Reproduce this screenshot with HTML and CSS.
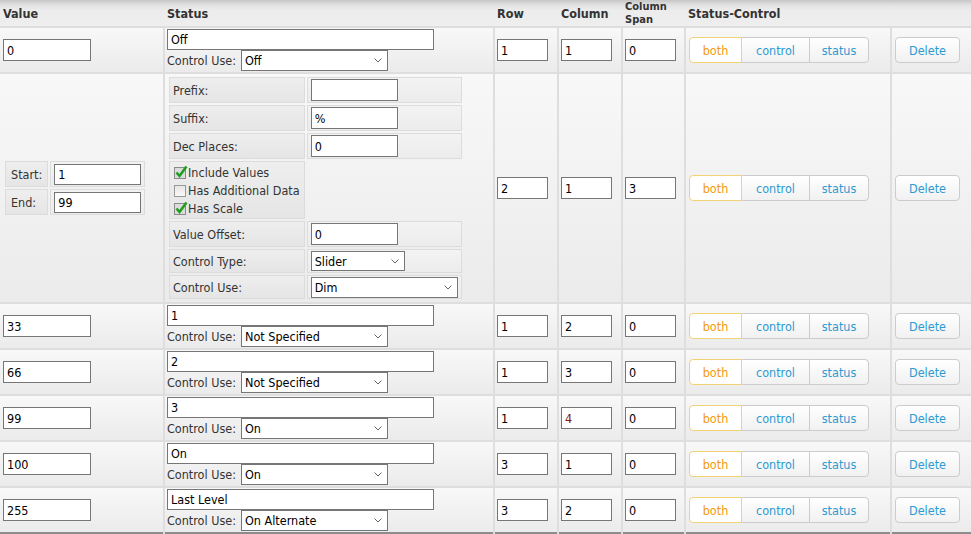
FILE: index.html
```html
<!DOCTYPE html>
<html>
<head>
<meta charset="utf-8">
<title>Values</title>
<link rel="stylesheet" href="styles.css">
</head>
<body>
<table class="grid">
  <colgroup>
    <col class="c-val"><col class="c-status"><col class="c-row"><col class="c-col"><col class="c-span"><col class="c-sc"><col class="c-del">
  </colgroup>
  <thead>
    <tr><th>Value</th><th>Status</th><th>Row</th><th>Column</th><th class="two">Column<br>Span</th><th>Status-Control</th><th></th></tr>
  </thead>
  <tbody>
    <tr>
      <td class="cv"><input class="in-val" value="0"></td>
      <td class="cs"><input class="in-status" value="Off"><div class="use"><label>Control Use:</label><span class="sel w147"><select><option>Off</option></select><svg class="chev" width="8" height="5" viewBox="0 0 8 5"><path d="M0.5 0.5L4 4L7.5 0.5" fill="none" stroke="#666"/></svg></span></div></td>
      <td><input class="in-num" value="1"></td>
      <td><input class="in-num" value="1"></td>
      <td><input class="in-num" value="0"></td>
      <td class="csc"><div class="seg"><button class="on">both</button><button class="mid">control</button><button class="last">status</button></div></td>
      <td class="cd"><button class="btn">Delete</button></td>
    </tr>
    <tr>
      <td class="cv">
        <table class="mini">
          <tr><td class="lbl">Start:</td><td class="fld"><input class="in-mini" value="1"></td></tr>
          <tr><td class="lbl">End:</td><td class="fld"><input class="in-mini" value="99"></td></tr>
        </table>
      </td>
      <td class="cs">
        <table class="props">
          <tr><td class="lbl">Prefix:</td><td class="fld"><input class="in-prop" value=""></td></tr>
          <tr><td class="lbl">Suffix:</td><td class="fld"><input class="in-prop" value="%"></td></tr>
          <tr><td class="lbl">Dec Places:</td><td class="fld"><input class="in-prop" value="0"></td></tr>
          <tr>
            <td class="lbl checks">
              <label class="cb"><svg width="14" height="14" viewBox="0 0 14 14"><rect x="0.5" y="2.5" width="11" height="11" fill="#dcdcdc" stroke="#8a8a8a"/><path d="M2.5 7.5L5.5 11L12.5 1.5" fill="none" stroke="#1f9e1f" stroke-width="2.6"/></svg>Include Values</label>
              <label class="cb"><svg width="14" height="14" viewBox="0 0 14 14"><defs><linearGradient id="ub" x1="0" y1="0" x2="0" y2="1"><stop offset="0" stop-color="#e4e4e4"/><stop offset="1" stop-color="#fafafa"/></linearGradient></defs><rect x="0.5" y="2.5" width="11" height="11" fill="url(#ub)" stroke="#9a9a9a"/></svg>Has Additional Data</label>
              <label class="cb"><svg width="14" height="14" viewBox="0 0 14 14"><rect x="0.5" y="2.5" width="11" height="11" fill="#dcdcdc" stroke="#8a8a8a"/><path d="M2.5 7.5L5.5 11L12.5 1.5" fill="none" stroke="#1f9e1f" stroke-width="2.6"/></svg>Has Scale</label>
            </td>
            <td class="empty"></td>
          </tr>
          <tr><td class="lbl">Value Offset:</td><td class="fld"><input class="in-prop" value="0"></td></tr>
          <tr class="selrow"><td class="lbl">Control Type:</td><td class="fld"><span class="sel w94"><select><option>Slider</option></select><svg class="chev" width="8" height="5" viewBox="0 0 8 5"><path d="M0.5 0.5L4 4L7.5 0.5" fill="none" stroke="#666"/></svg></span></td></tr>
          <tr class="selrow"><td class="lbl">Control Use:</td><td class="fld"><span class="sel w147"><select><option>Dim</option></select><svg class="chev" width="8" height="5" viewBox="0 0 8 5"><path d="M0.5 0.5L4 4L7.5 0.5" fill="none" stroke="#666"/></svg></span></td></tr>
        </table>
      </td>
      <td><input class="in-num" value="2"></td>
      <td><input class="in-num" value="1"></td>
      <td><input class="in-num" value="3"></td>
      <td class="csc"><div class="seg"><button class="on">both</button><button class="mid">control</button><button class="last">status</button></div></td>
      <td class="cd"><button class="btn">Delete</button></td>
    </tr>
    <tr>
      <td class="cv"><input class="in-val" value="33"></td>
      <td class="cs"><input class="in-status" value="1"><div class="use"><label>Control Use:</label><span class="sel w147"><select><option>Not Specified</option></select><svg class="chev" width="8" height="5" viewBox="0 0 8 5"><path d="M0.5 0.5L4 4L7.5 0.5" fill="none" stroke="#666"/></svg></span></div></td>
      <td><input class="in-num" value="1"></td>
      <td><input class="in-num" value="2"></td>
      <td><input class="in-num" value="0"></td>
      <td class="csc"><div class="seg"><button class="on">both</button><button class="mid">control</button><button class="last">status</button></div></td>
      <td class="cd"><button class="btn">Delete</button></td>
    </tr>
    <tr>
      <td class="cv"><input class="in-val" value="66"></td>
      <td class="cs"><input class="in-status" value="2"><div class="use"><label>Control Use:</label><span class="sel w147"><select><option>Not Specified</option></select><svg class="chev" width="8" height="5" viewBox="0 0 8 5"><path d="M0.5 0.5L4 4L7.5 0.5" fill="none" stroke="#666"/></svg></span></div></td>
      <td><input class="in-num" value="1"></td>
      <td><input class="in-num" value="3"></td>
      <td><input class="in-num" value="0"></td>
      <td class="csc"><div class="seg"><button class="on">both</button><button class="mid">control</button><button class="last">status</button></div></td>
      <td class="cd"><button class="btn">Delete</button></td>
    </tr>
    <tr>
      <td class="cv"><input class="in-val" value="99"></td>
      <td class="cs"><input class="in-status" value="3"><div class="use"><label>Control Use:</label><span class="sel w147"><select><option>On</option></select><svg class="chev" width="8" height="5" viewBox="0 0 8 5"><path d="M0.5 0.5L4 4L7.5 0.5" fill="none" stroke="#666"/></svg></span></div></td>
      <td><input class="in-num" value="1"></td>
      <td><input class="in-num red" value="4"></td>
      <td><input class="in-num" value="0"></td>
      <td class="csc"><div class="seg"><button class="on">both</button><button class="mid">control</button><button class="last">status</button></div></td>
      <td class="cd"><button class="btn">Delete</button></td>
    </tr>
    <tr>
      <td class="cv"><input class="in-val" value="100"></td>
      <td class="cs"><input class="in-status" value="On"><div class="use"><label>Control Use:</label><span class="sel w147"><select><option>On</option></select><svg class="chev" width="8" height="5" viewBox="0 0 8 5"><path d="M0.5 0.5L4 4L7.5 0.5" fill="none" stroke="#666"/></svg></span></div></td>
      <td><input class="in-num" value="3"></td>
      <td><input class="in-num" value="1"></td>
      <td><input class="in-num" value="0"></td>
      <td class="csc"><div class="seg"><button class="on">both</button><button class="mid">control</button><button class="last">status</button></div></td>
      <td class="cd"><button class="btn">Delete</button></td>
    </tr>
    <tr>
      <td class="cv"><input class="in-val" value="255"></td>
      <td class="cs"><input class="in-status" value="Last Level"><div class="use"><label>Control Use:</label><span class="sel w147"><select><option>On Alternate</option></select><svg class="chev" width="8" height="5" viewBox="0 0 8 5"><path d="M0.5 0.5L4 4L7.5 0.5" fill="none" stroke="#666"/></svg></span></div></td>
      <td><input class="in-num" value="3"></td>
      <td><input class="in-num" value="2"></td>
      <td><input class="in-num" value="0"></td>
      <td class="csc"><div class="seg"><button class="on">both</button><button class="mid">control</button><button class="last">status</button></div></td>
      <td class="cd"><button class="btn">Delete</button></td>
    </tr>
  </tbody>
</table>
</body>
</html>
```

FILE: styles.css
```css
* { box-sizing: border-box; }
html, body { margin: 0; padding: 0; background: #fff; }
body {
  font-family: "DejaVu Sans Condensed", "DejaVu Sans", sans-serif;
  font-stretch: condensed;
  font-size: 12.5px;
  color: #333;
}

.grid {
  width: 971px;
  border-collapse: collapse;
  table-layout: fixed;
  border-bottom: 2px solid #8c8c8c;
}
.c-val { width: 164px; }
.c-status { width: 330px; }
.c-row { width: 64px; }
.c-col { width: 64px; }
.c-span { width: 63px; }
.c-sc { width: 206px; }
.c-del { width: 80px; }

.grid > thead > tr > th {
  text-align: left;
  font-weight: bold;
  font-size: 12.5px;
  color: #333;
  padding: 0 3px;
  line-height: 13px;
  height: 27px;
  vertical-align: middle;
  background: linear-gradient(#c6c6c6 0, #e2e2e2 5px, #ececec 10px, #eeeeee 100%);
  border-bottom: 2px solid #dedede;
}
.grid > thead > tr > th.two { font-size: 11px; line-height: 13px; }

.grid > tbody > tr > td {
  padding: 1px 2px;
  border: 2px solid #dedede;
  background: linear-gradient(#f8f8f8, #ebebeb);
  vertical-align: middle;
}
.grid > tbody > tr > td.cv { border-left: none; padding-left: 3px; }
.grid > tbody > tr > td.cd { border-right: none; padding-left: 3px; }
.grid > tbody > tr > td.csc { padding-left: 3px; }
.grid > tbody > tr:last-child > td { border-bottom: none; }

input {
  font: inherit;
  color: #000;
  background: #fff;
  border: 1px solid #767676;
  padding: 0 3px;
  margin: 0;
  outline: none;
  display: block;
}
.in-val { width: 88px; height: 22px; }
.in-status { width: 267px; height: 21px; }
.in-num { width: 51px; height: 22px; }
.in-num.red { color: #8a1010; }
.in-mini { width: 87px; height: 21px; }
.in-prop { width: 87px; height: 22px; }

.use { display: flex; align-items: center; height: 21px; }
.use label { margin-right: 5px; color: #333; }

.sel { position: relative; display: inline-block; }
.sel select {
  -webkit-appearance: none;
  appearance: none;
  font: inherit;
  color: #000;
  background: #fff;
  border: 1px solid #767676;
  border-radius: 0;
  padding: 0 3px;
  margin: 0;
  height: 21px;
  display: block;
  outline: none;
}
.sel.w147 select { width: 147px; }
.sel.w94 select { width: 94px; height: 20px; }
.sel .chev { position: absolute; right: 6px; top: 8px; }

/* nested property tables */
.props, .mini { border-collapse: separate; border-spacing: 2px; margin: 0; }
.props td, .mini td { border: 1px solid #dcdcdc; vertical-align: middle; }
.props td.lbl { width: 134px; height: 26px; padding: 0 3px; background: linear-gradient(#eeeeee, #e5e5e5); color: #333; white-space: nowrap; }
.props td.fld { width: 155px; height: 26px; padding: 0 3px; background: linear-gradient(#f3f3f3, #ececec); }
.props tr.selrow td { height: 24px; }
.props td.checks { height: 57px; padding: 1px 4px; }
.props td.empty { border: none; background: transparent; }
.cb { display: flex; align-items: center; height: 18px; color: #333; white-space: nowrap; }
.cb svg { display: block; flex: none; }

.mini td.lbl { width: 42px; height: 26px; padding: 0 5px; background: linear-gradient(#eeeeee, #e5e5e5); color: #333; }
.mini td.fld { width: 94px; height: 26px; padding: 0 3px; background: linear-gradient(#f3f3f3, #ececec); }

/* segmented buttons */
.seg { display: flex; height: 26px; }
.seg button, .btn {
  font: inherit;
  font-size: 12.5px;
  color: #2b9bd3;
  background: linear-gradient(#ffffff, #f1f1f1);
  border: 1px solid #cccccc;
  margin: 0;
  padding: 0;
  height: 26px;
  cursor: pointer;
}
.seg button.on {
  width: 53px;
  color: #f29a0e;
  background: #fff;
  border-color: #f3d276;
  border-radius: 4px 0 0 4px;
  position: relative;
  z-index: 1;
}
.seg button.mid { width: 69px; margin-left: -1px; }
.seg button.last { width: 60px; margin-left: -1px; border-radius: 0 4px 4px 0; }
.btn { width: 65px; border-radius: 4px; }
```
